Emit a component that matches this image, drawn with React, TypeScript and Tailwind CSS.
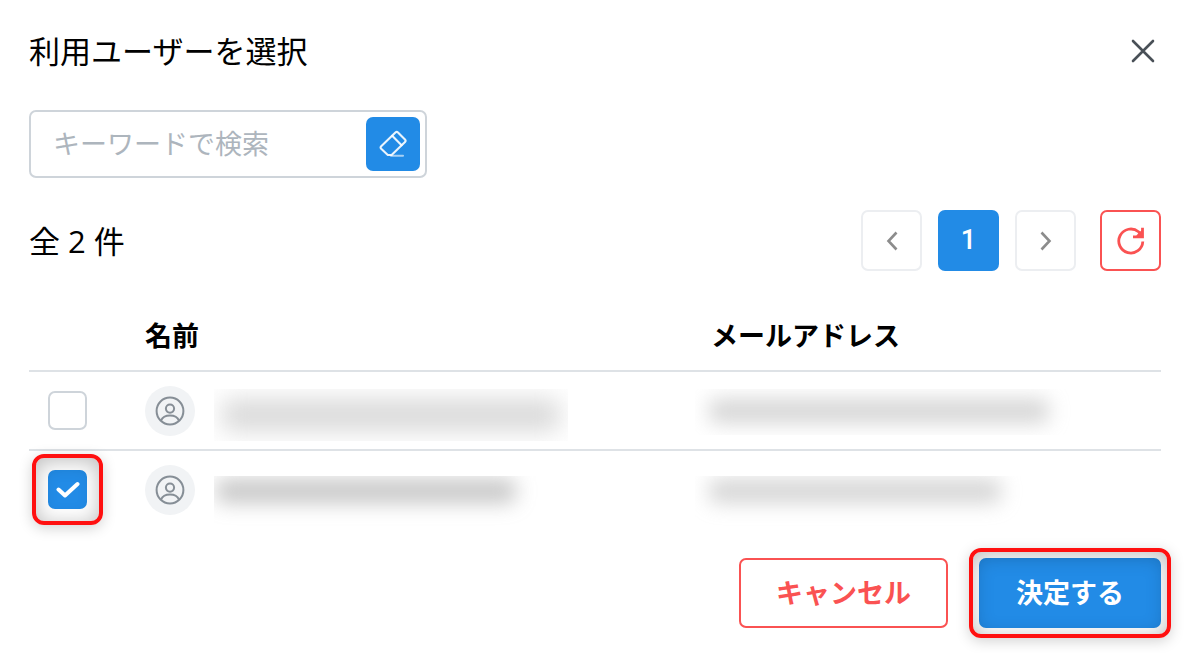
import { useState } from "react";

const users = [
  {
    id: "user-1",
    selected: false,
    cellPadding: "pt-[17px]",
    nameBox: "h-[52px] w-[354px]",
    nameBar: "top-[10px] left-[8px] h-8 w-[338px] bg-neutral-400/40 blur-[12px]",
    mailBox: "h-[46px] w-[376px]",
    mailBar: "top-[10px] left-[14px] h-6 w-[340px] bg-neutral-400/45 blur-[10px]",
  },
  {
    id: "user-2",
    selected: true,
    cellPadding: "pt-[25px]",
    nameBox: "h-[52px] w-[334px]",
    nameBar: "top-[3px] left-[2px] h-6 w-[300px] bg-neutral-500/40 blur-[10px]",
    mailBox: "h-[52px] w-[336px]",
    mailBar: "top-[3px] left-[14px] h-6 w-[292px] bg-neutral-400/45 blur-[10px]",
  },
];

function Masked({ box, bar }: { box: string; bar: string }) {
  return (
    <div className={`relative overflow-hidden ${box}`} aria-hidden="true">
      <div className={`absolute rounded-lg ${bar}`} />
    </div>
  );
}

function Highlight({ className }: { className: string }) {
  return (
    <span
      aria-hidden="true"
      className={`pointer-events-none absolute rounded-xl border-4 border-[#ff1010] shadow-[0_3px_14px_rgba(0,0,0,0.18),inset_0_3px_20px_rgba(0,0,0,0.26)] ${className}`}
    />
  );
}

function UserIcon() {
  return (
    <svg viewBox="0 0 30 30" className="size-[30px]" fill="none" stroke="#868e96" strokeWidth="2">
      <circle cx="15" cy="15" r="13.4" />
      <circle cx="15" cy="12.6" r="4.1" />
      <path d="M6 24.6c1.3-3.2 4.7-5.1 9-5.1s7.7 1.9 9 5.1" />
    </svg>
  );
}

function Chevron({ d }: { d: string }) {
  return (
    <svg viewBox="0 0 12 20" className="h-5 w-3" fill="none" stroke="#8c8c8c" strokeWidth="2.6">
      <path d={d} />
    </svg>
  );
}

export default function App() {
  const [selected, setSelected] = useState<Record<string, boolean>>(
    Object.fromEntries(users.map((u) => [u.id, u.selected]))
  );
  const [keyword, setKeyword] = useState("");

  return (
    <main className="min-h-screen bg-white pt-7 pr-[27px] pb-6 pl-[29px] font-['Open_Sans','Noto_Sans_CJK_JP',sans-serif] text-[27px] text-black">
      <header className="flex h-[46px] items-center justify-between">
        <h1 className="text-[31px] leading-[46px]">利用ユーザーを選択</h1>
        <button type="button" aria-label="閉じる" className="flex size-9 items-center justify-center">
          <svg viewBox="0 0 24 24" className="size-6" fill="none" stroke="#495057" strokeWidth="2.6" strokeLinecap="round">
            <path d="M2 2l20 20M22 2L2 22" />
          </svg>
        </button>
      </header>

      <div className="mt-9 flex h-[68px] w-[398px] items-center rounded-[7px] border-2 border-[#ced4da] pr-[5px] pl-[22px]">
        <input
          type="text"
          aria-label="キーワードで検索"
          placeholder="キーワードで検索"
          value={keyword}
          onChange={(e) => setKeyword(e.target.value)}
          className="min-w-0 flex-1 bg-transparent leading-10 outline-none placeholder:text-[#adb5bd]"
        />
        <button
          type="button"
          aria-label="クリア"
          onClick={() => setKeyword("")}
          className="flex size-[54px] shrink-0 items-center justify-center rounded-[7px] bg-[#228be6]"
        >
          <svg viewBox="0 0 28 28" className="size-7" fill="none" stroke="white" strokeOpacity="0.9" strokeWidth="2.1" strokeLinejoin="round" strokeLinecap="round">
            <path d="M8.8 25L2.2 18.7Q1 17.5 2.2 16.2L16.4 2.4Q17.7 1.2 19 2.4L26 9.5Q27.2 10.8 26 12.1L12.6 25Z" />
            <path d="M13.2 5.8L22.6 15.2" />
            <path d="M12 25.7H24" strokeOpacity="0.6" />
          </svg>
        </button>
      </div>

      <div className="mt-8 flex items-center justify-between">
        <p className="text-[31px] leading-[46px]">全 2 件</p>
        <nav aria-label="ページ" className="flex items-center">
          <div className="flex gap-4">
            <button type="button" aria-label="前へ" className="flex size-[61px] items-center justify-center rounded-[7px] border-2 border-[#eceef1]">
              <Chevron d="M10.5 1.5L2.5 10l8 8.5" />
            </button>
            <button type="button" aria-current="page" className="flex size-[61px] items-center justify-center rounded-[7px] bg-[#228be6] font-['Roboto',sans-serif] font-medium text-white">
              1
            </button>
            <button type="button" aria-label="次へ" className="flex size-[61px] items-center justify-center rounded-[7px] border-2 border-[#eceef1]">
              <Chevron d="M1.5 1.5L9.5 10l-8 8.5" />
            </button>
          </div>
          <button type="button" aria-label="更新" className="ml-6 flex size-[61px] items-center justify-center rounded-[7px] border-2 border-[#fa5252]">
            <svg viewBox="0 0 28 28" className="size-7" fill="none" stroke="#fa5252" strokeWidth="2.8">
              <path d="M25.8 14.5A12 12 0 1 1 21.5 4.8L24.5 7.5" />
              <path d="M25.5 0.8V9.800H16" />
              <path d="M25.5 2.500V9.800H18.500L21.500 6Z" fill="#fa5252" stroke="none" />
            </svg>
          </button>
        </nav>
      </div>

      <table className="mt-[31px] w-full table-fixed border-separate border-spacing-0">
        <colgroup>
          <col className="w-[116px]" />
          <col className="w-[50%]" />
          <col />
        </colgroup>
        <thead>
          <tr className="text-left leading-10 font-bold">
            <td className="border-b-2 border-[#dee2e6]" />
            <th scope="col" className="h-[70px] border-b-2 border-[#dee2e6] p-0">名前</th>
            <th scope="col" className="border-b-2 border-[#dee2e6] p-0">メールアドレス</th>
          </tr>
        </thead>
        <tbody className="[&>tr:not(:last-child)>td]:border-b-2 [&>tr:not(:last-child)>td]:border-[#dee2e6]">
          {users.map((u) => (
            <tr key={u.id}>
              <td className="py-0 pr-0 pl-[19px]">
                <label className="relative flex size-[39px] items-center justify-center">
                  <input
                    type="checkbox"
                    aria-label="ユーザーを選択"
                    checked={selected[u.id]}
                    onChange={(e) => setSelected({ ...selected, [u.id]: e.target.checked })}
                    className="peer size-[39px] appearance-none rounded-[7px] border-2 border-[#ced4da] bg-white checked:border-[#228be6] checked:bg-[#228be6]"
                  />
                  <svg viewBox="0 0 24 18" className="absolute hidden h-[18px] w-6 peer-checked:block" fill="none" stroke="white" strokeWidth="4" strokeLinecap="round" strokeLinejoin="round">
                    <path d="M2.5 8.5L9 14.5L21.5 3" />
                  </svg>
                  {u.selected && <Highlight className="-inset-4" />}
                </label>
              </td>
              <td className="p-0">
                <div className="flex h-[77px] items-start gap-[19px]">
                  <span className="flex size-[50px] shrink-0 items-center justify-center self-center rounded-full bg-[#f1f3f5]">
                    <UserIcon />
                  </span>
                  <div className={u.cellPadding}>
                    <Masked box={u.nameBox} bar={u.nameBar} />
                  </div>
                </div>
              </td>
              <td className="p-0">
                <div className={`-ml-4 h-[77px] ${u.cellPadding}`}>
                  <Masked box={u.mailBox} bar={u.mailBar} />
                </div>
              </td>
            </tr>
          ))}
        </tbody>
      </table>

      <footer className="mt-[30px] flex justify-end gap-[31px] leading-10 font-bold">
        <button type="button" className="h-[70px] rounded-[7px] border-2 border-[#fa5252] px-[35px] text-[#fa5252]">
          キャンセル
        </button>
        <button type="button" className="relative h-[70px] rounded-[7px] bg-[#228be6] px-[37px] text-white">
          決定する
          <Highlight className="-inset-[10px]" />
        </button>
      </footer>
    </main>
  );
}
